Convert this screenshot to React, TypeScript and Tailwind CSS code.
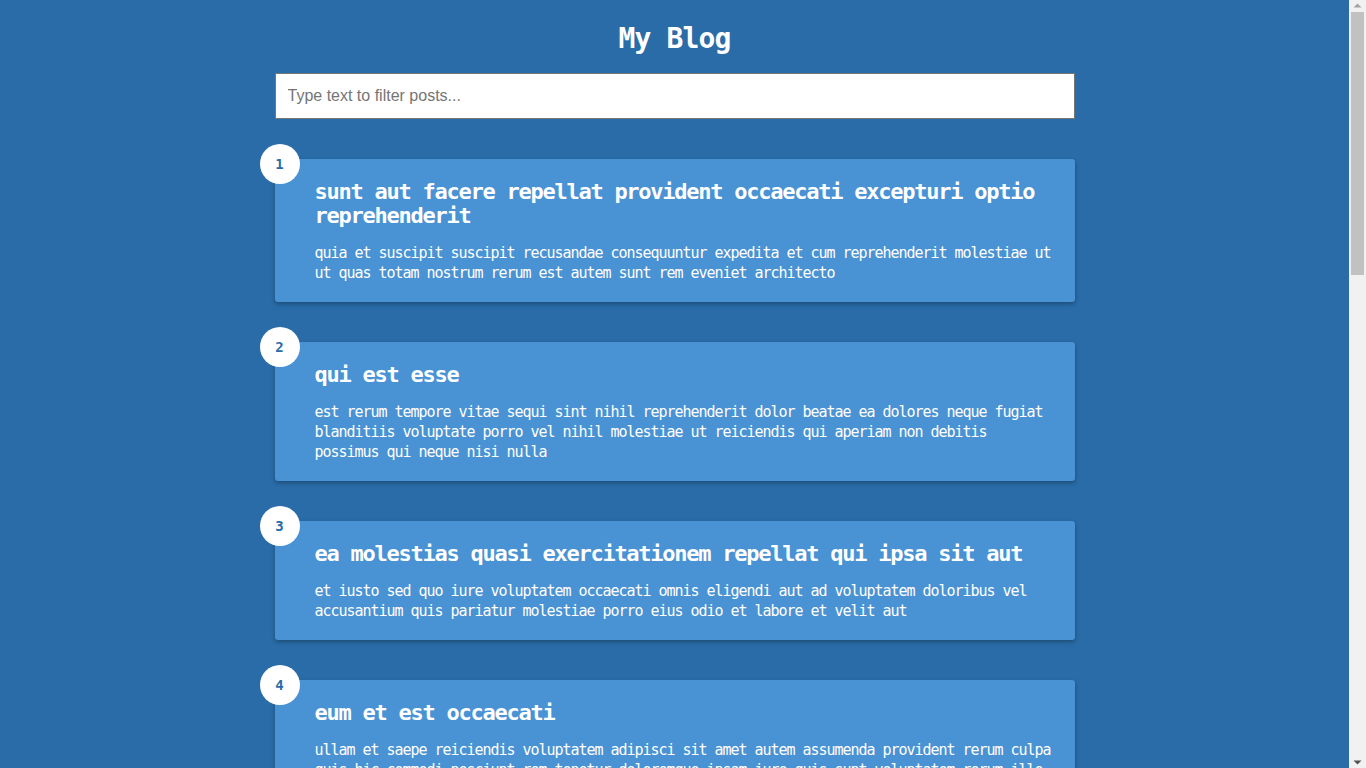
const posts = [
  {
    id: 1,
    title: 'sunt aut facere repellat provident occaecati excepturi optio reprehenderit',
    body: 'quia et suscipit suscipit recusandae consequuntur expedita et cum reprehenderit molestiae ut ut quas totam nostrum rerum est autem sunt rem eveniet architecto',
  },
  {
    id: 2,
    title: 'qui est esse',
    body: 'est rerum tempore vitae sequi sint nihil reprehenderit dolor beatae ea dolores neque fugiat blanditiis voluptate porro vel nihil molestiae ut reiciendis qui aperiam non debitis possimus qui neque nisi nulla',
  },
  {
    id: 3,
    title: 'ea molestias quasi exercitationem repellat qui ipsa sit aut',
    body: 'et iusto sed quo iure voluptatem occaecati omnis eligendi aut ad voluptatem doloribus vel accusantium quis pariatur molestiae porro eius odio et labore et velit aut',
  },
  {
    id: 4,
    title: 'eum et est occaecati',
    body: 'ullam et saepe reiciendis voluptatem adipisci sit amet autem assumenda provident rerum culpa quis hic commodi nesciunt rem tenetur doloremque ipsam iure quis sunt voluptatem rerum illo velit',
  },
  {
    id: 5,
    title: 'nesciunt quas odio',
    body: 'repudiandae veniam quaerat sunt sed alias aut fugiat sit autem sed est voluptatem omnis possimus esse voluptatibus quis est aut tenetur dolor neque',
  },
];

function Scrollbar() {
  return (
    <div className="w-[17px] h-screen bg-[#f1f1f1] flex flex-col items-center shrink-0">
      <svg width="17" height="12" viewBox="0 0 17 12" className="shrink-0">
        <path d="M4.5 7.5 L8.5 3.5 L12.5 7.5 Z" fill="#a3a3a3" />
      </svg>
      <div className="w-[13px] h-[263px] bg-[#c1c1c1]" />
      <div className="flex-1" />
      <svg width="17" height="12" viewBox="0 0 17 12" className="shrink-0">
        <path d="M4.5 4.5 L8.5 8.5 L12.5 4.5 Z" fill="#505050" />
      </svg>
    </div>
  );
}

export default function App() {
  return (
    <div className="h-screen overflow-hidden flex bg-[#296ca8]">
      <main
        className="flex-1 overflow-hidden text-white flex flex-col items-center pb-[100px]"
        style={{ fontFamily: '"DejaVu Sans Mono", monospace' }}
      >
        <h1 className="mt-[23px] text-[28px] tracking-[-0.86px] leading-[32px] font-bold text-center">
          My Blog
        </h1>

        {/* Filter */}
        <div className="mt-[18px] w-[80vw] max-w-[800px]">
          <input
            type="text"
            placeholder="Type text to filter posts..."
            className="w-full h-[46px] px-3 bg-white text-black text-base border border-[#767676] placeholder:text-[#757575] outline-none"
            style={{ fontFamily: '"Liberation Sans", Arial, sans-serif' }}
          />
        </div>

        {/* Posts */}
        {posts.map((post) => (
          <div
            key={post.id}
            className="relative mt-10 w-[80vw] max-w-[800px] flex shrink-0 bg-[#4992d3] rounded-[3px] px-5 pt-[21px] pb-[19px] shadow-[0_2px_4px_rgba(0,0,0,0.3)]"
          >
            <div className="absolute -top-[15px] -left-[15px] w-10 h-10 rounded-full bg-white text-[#296ca8] flex items-center justify-center text-[14px] font-bold">
              {post.id}
            </div>
            <div className="ml-5">
              <h2 className="text-[22px] tracking-[-1.25px] leading-6 font-bold">{post.title}</h2>
              <p className="mt-[15px] text-[15px] tracking-[-1.03px] leading-[20px]">{post.body}</p>
            </div>
          </div>
        ))}
      </main>
      <Scrollbar />
    </div>
  );
}
